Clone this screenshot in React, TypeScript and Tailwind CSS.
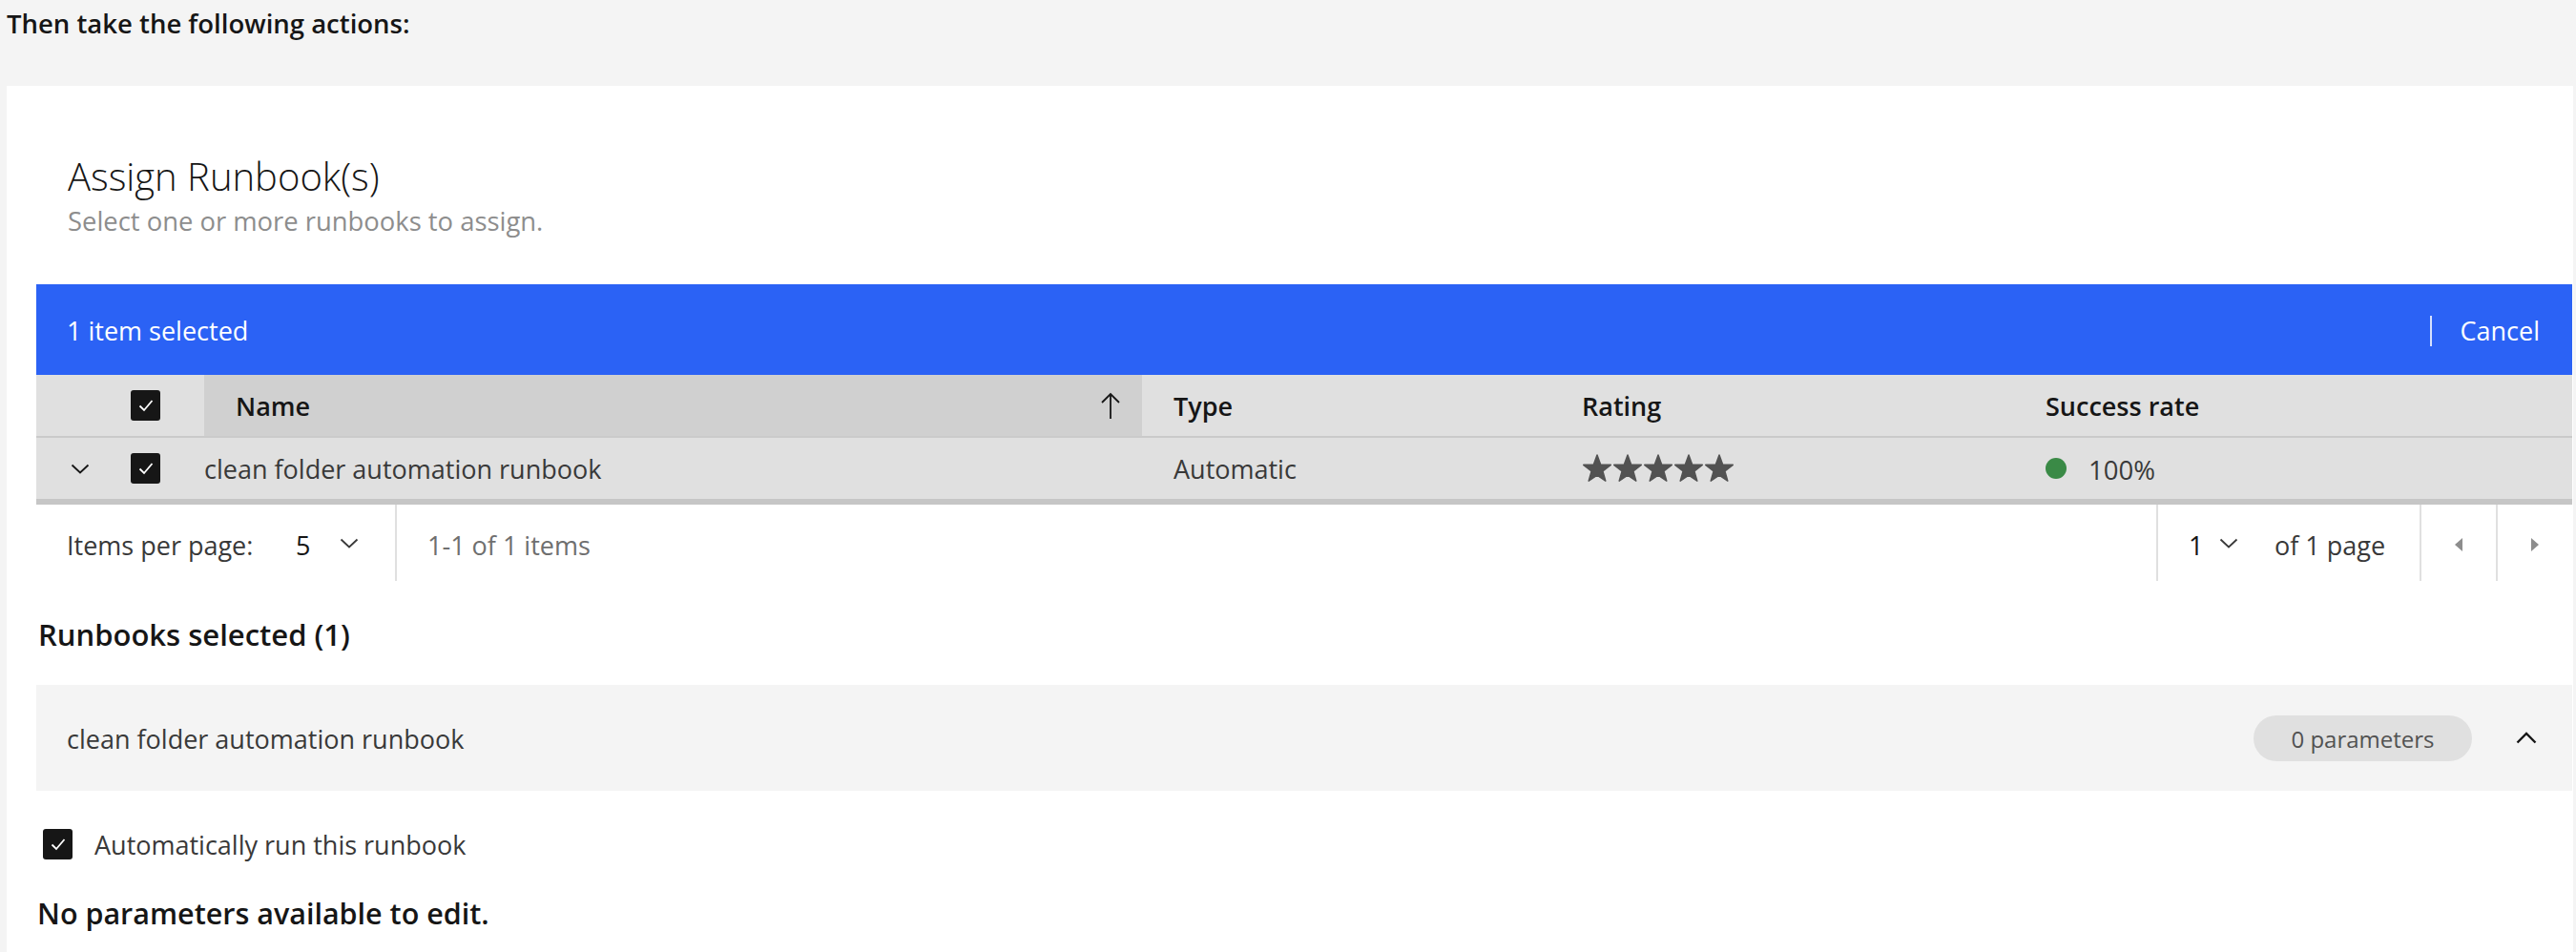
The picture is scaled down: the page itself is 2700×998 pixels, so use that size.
import React from 'react';

const Checkbox: React.FC = () => (
  <span className="flex h-[32px] w-[31px] items-center justify-center rounded-[3px] bg-[#161616]">
    <svg width="20" height="16" viewBox="0 0 20 16">
      <path d="M3.5 8.5 L8 13 L16.5 3" fill="none" stroke="#ffffff" strokeWidth="1.8" />
    </svg>
  </span>
);

const Star: React.FC = () => (
  <svg width="32" height="30" viewBox="0 0 32 30">
    <polygon
      points="16,1 19.64,10.98 30.27,11.36 21.9,17.92 24.82,28.14 16,22.2 7.18,28.14 10.1,17.92 1.73,11.36 12.36,10.98"
      fill="#525252"
      stroke="#525252"
      strokeWidth="1.5"
      strokeLinejoin="round"
    />
  </svg>
);

const SmallChevronDown: React.FC<{ color?: string }> = ({ color = '#161616' }) => (
  <svg width="20" height="11" viewBox="0 0 20 11">
    <polyline points="1.5,1.5 10,9.5 18.5,1.5" fill="none" stroke={color} strokeWidth="1.8" />
  </svg>
);

const App: React.FC = () => {
  return (
    <div className="min-h-screen w-full bg-[#f4f4f4] font-['Open_Sans',sans-serif] text-[#161616]">
      {/* Intro line */}
      <div className="h-[90px] pl-[7px]">
        <div className="flex h-[50px] items-center text-[27.5px] font-semibold">
          Then take the following actions:
        </div>
      </div>

      {/* Panel */}
      <div className="ml-[7px] mr-[3px] bg-white pb-[21px] pl-[31px] pr-[1px]">
        <div className="pl-[33px] pt-[70px]">
          <h2 className="h-[50px] text-[40px] font-light leading-[50px]">Assign Runbook(s)</h2>
          <p className="mt-[4px] h-[36px] text-[27.4px] leading-[36px] text-[#8d8d8d]">
            Select one or more runbooks to assign.
          </p>
        </div>

        {/* Batch actions */}
        <div className="mt-[48px] flex h-[95px] items-center bg-[#2b62f5] pl-[32px] pr-[34px] pt-[3px] text-[27px] text-white">
          <span>1 item selected</span>
          <span className="ml-auto h-[32px] w-[2px] bg-white/80" />
          <span className="ml-[30px]">Cancel</span>
        </div>

        {/* Header */}
        <div className="flex h-[66px] border-b-2 border-[#cacaca] bg-[#e0e0e0] text-[27px] font-semibold">
          <div className="w-[92px]" />
          <div className="flex w-[84px] items-center pl-[7px]">
            <Checkbox />
          </div>
          <div className="flex w-[983px] items-center justify-between bg-[#d0d0d0] pl-[33px] pr-[21px]">
            <span className="pt-[3px]">Name</span>
            <svg width="24" height="30" viewBox="0 0 24 30">
              <path d="M12 3 V29 M3 12 L12 3 L21 12" fill="none" stroke="#161616" strokeWidth="1.8" />
            </svg>
          </div>
          <div className="flex w-[428px] items-center pl-[33px] pt-[3px]">Type</div>
          <div className="flex w-[486px] items-center pl-[33px] pt-[3px]">Rating</div>
          <div className="flex flex-1 items-center pl-[33px] pt-[3px]">Success rate</div>
        </div>

        {/* Row */}
        <div className="flex h-[70px] border-b-[6px] border-[#c6c6c6] bg-[#e0e0e0] text-[27px] text-[#393939]">
          <div className="flex w-[92px] items-center justify-center">
            <SmallChevronDown />
          </div>
          <div className="flex w-[84px] items-center pl-[7px]">
            <Checkbox />
          </div>
          <div className="flex w-[983px] items-center pt-[3px]">clean folder automation runbook</div>
          <div className="flex w-[428px] items-center pl-[33px] pt-[3px]">Automatic</div>
          <div className="flex w-[486px] items-center pl-[33px]">
            {[0, 1, 2, 3, 4].map((i) => (
              <Star key={i} />
            ))}
          </div>
          <div className="flex flex-1 items-center pl-[33px]">
            <span className="h-[22px] w-[22px] rounded-full bg-[#3a8a46]" />
            <span className="ml-[23px] pt-[3px] text-[27.5px]">100%</span>
          </div>
        </div>

        {/* Pagination */}
        <div className="flex h-[80px] text-[27px] text-[#393939]">
          <div className="flex w-[376px] items-center pl-[32px]">
            <span className="w-[240px] pt-[6px]">Items per page:</span>
            <span className="w-[46px] pt-[6px] text-[#161616]">5</span>
            <SmallChevronDown color="#393939" />
          </div>
          <div className="w-[2px] bg-[#e0e0e0]" />
          <div className="flex items-center pl-[32px] pt-[6px] text-[#6f6f6f]">1-1 of 1 items</div>
          <div className="ml-auto w-[2px] bg-[#e0e0e0]" />
          <div className="flex w-[274px] items-center pl-[32px]">
            <span className="w-[32px] pt-[6px] text-[#161616]">1</span>
            <SmallChevronDown color="#393939" />
            <span className="ml-[38px] pt-[6px]">of 1 page</span>
          </div>
          <div className="w-[2px] bg-[#e0e0e0]" />
          <div className="flex w-[78px] items-center justify-center pt-[4px]">
            <svg width="10" height="16" viewBox="0 0 10 16">
              <polygon points="9,1 9,15 1,8" fill="#8d8d8d" />
            </svg>
          </div>
          <div className="w-[2px] bg-[#e0e0e0]" />
          <div className="flex w-[78px] items-center justify-center pt-[4px]">
            <svg width="10" height="16" viewBox="0 0 10 16">
              <polygon points="1,1 1,15 9,8" fill="#8d8d8d" />
            </svg>
          </div>
        </div>

        {/* Selected runbooks */}
        <h3 className="mt-[36px] h-[40px] pl-[2px] text-[31px] font-semibold leading-[40px]">
          Runbooks selected (1)
        </h3>

        <div className="mt-[33px] flex h-[111px] items-center bg-[#f4f4f4] pl-[32px] pr-[37px] text-[27px] text-[#393939]">
          <span className="pt-[4px]">clean folder automation runbook</span>
          <span className="ml-auto flex h-[48px] w-[229px] items-center justify-center rounded-full bg-[#e0e0e0] pt-[2px] text-[24px] text-[#525252]">
            0 parameters
          </span>
          <svg className="ml-[46px]" width="22" height="13" viewBox="0 0 22 13">
            <polyline points="1.5,11.5 11,2 20.5,11.5" fill="none" stroke="#161616" strokeWidth="2.4" />
          </svg>
        </div>

        <div className="mt-[36px] flex h-[40px] items-center pl-[7px] text-[27px] text-[#393939]">
          <Checkbox />
          <span className="ml-[23px] pt-[2px]">Automatically run this runbook</span>
        </div>

        <div className="mt-[32px] h-[40px] pl-[1px] text-[30.5px] font-semibold leading-[40px]">
          No parameters available to edit.
        </div>
      </div>
    </div>
  );
};

export default App;
